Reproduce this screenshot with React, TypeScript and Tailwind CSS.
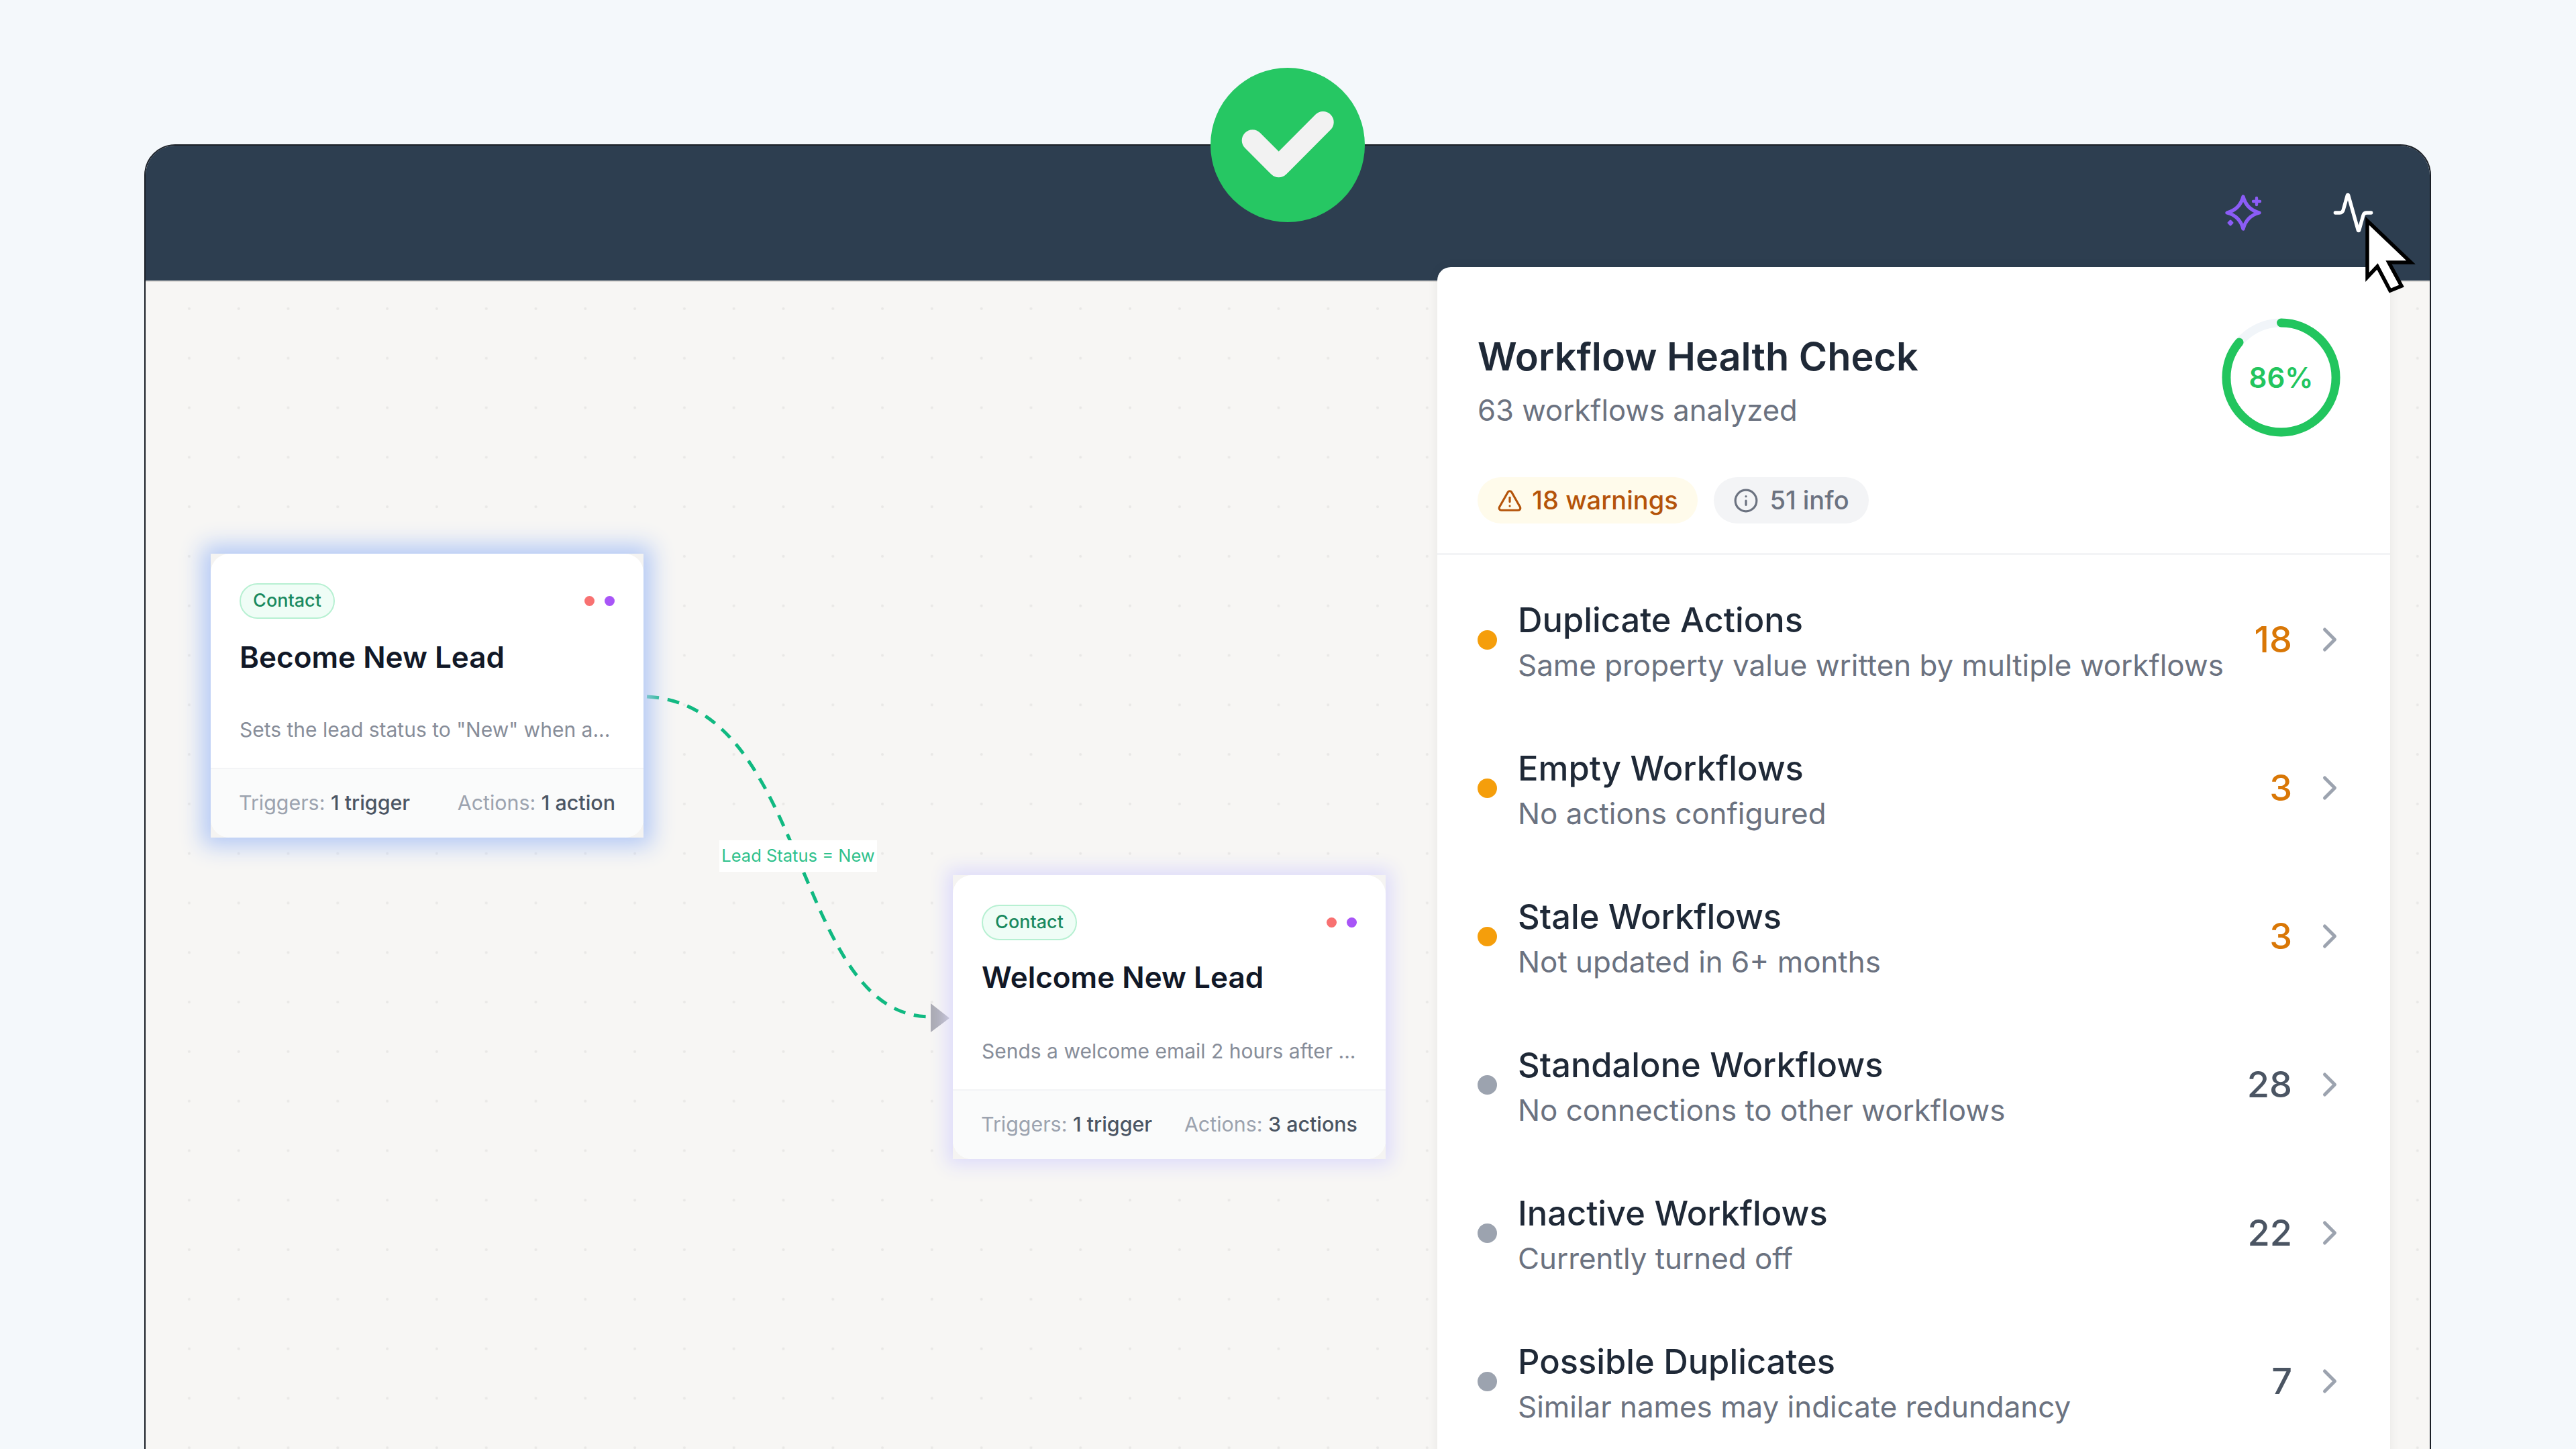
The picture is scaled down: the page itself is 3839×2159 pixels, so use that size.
import { Activity, ChevronRight, Info, TriangleAlert } from "lucide-react";

type Row = { title: string; sub: string; count: string; warn: boolean };
const rows: Row[] = [
  { title: "Duplicate Actions", sub: "Same property value written by multiple workflows", count: "18", warn: true },
  { title: "Empty Workflows", sub: "No actions configured", count: "3", warn: true },
  { title: "Stale Workflows", sub: "Not updated in 6+ months", count: "3", warn: true },
  { title: "Standalone Workflows", sub: "No connections to other workflows", count: "28", warn: false },
  { title: "Inactive Workflows", sub: "Currently turned off", count: "22", warn: false },
  { title: "Possible Duplicates", sub: "Similar names may indicate redundancy", count: "7", warn: false },
];

function HealthRow({ r }: { r: Row }) {
  return (
    <div className="flex h-[221px] shrink-0 items-center px-[60px]">
      <span className={`mt-[-5px] h-[29px] w-[29px] shrink-0 rounded-full ${r.warn ? "bg-[#f59e0b]" : "bg-[#9ca3af]"}`} />
      <div className="ml-[31px] flex min-w-0 flex-1 flex-col">
        <div className="text-[50.6px] leading-[60px] font-medium text-[#1f2937]">{r.title}</div>
        <div className="mt-[10px] text-[43.9px] leading-[54px] text-[#6b7280]">{r.sub}</div>
      </div>
      <div className={`mt-[-5px] text-[54px] leading-[60px] font-medium ${r.warn ? "text-[#d97706]" : "text-[#4b5563]"}`}>{r.count}</div>
      <ChevronRight className="mt-[-5px] ml-[26px] h-[60px] w-[60px] shrink-0 text-[#9ca3af]" strokeWidth={2} />
    </div>
  );
}

function NodeCard({ title, desc, actions, glow, className, titleClass }: { title: string; desc: string; actions: string; glow: string; className: string; titleClass: string }) {
  return (
    <div className={`absolute h-[423px] w-[645px] bg-[#f5f4f2] ${glow} ${className}`}>
      <div className="flex h-full flex-col overflow-hidden rounded-[28px] bg-white">
        <div className="flex h-[319px] flex-col px-[43px] pt-[44px]">
          <div className="flex items-center justify-between">
            <span className="flex h-[53px] w-[142px] items-center justify-center rounded-full border-2 border-[#b7f0d2] bg-[#effdf6] text-[27px] font-medium text-[#1a8a5f]">Contact</span>
            <span className="flex gap-[15px]">
              <span className="h-[15px] w-[15px] rounded-full bg-[#f87171]" />
              <span className="h-[15px] w-[15px] rounded-full bg-[#a855f7]" />
            </span>
          </div>
          <div className={`text-[44px] leading-[60px] font-semibold text-[#111827] ${titleClass}`}>{title}</div>
          <div className="text-[30px] leading-[40px] whitespace-nowrap text-[#878d99]">{desc}</div>
        </div>
        <div className="flex flex-1 items-center justify-between border-t-2 border-[#f3f4f6] bg-[#fafbfb] px-[42px] text-[30.4px] text-[#9ca3af]">
          <span>Triggers: <span className="font-medium text-[#4b5563]">1 trigger</span></span>
          <span>Actions: <span className="font-medium text-[#4b5563]">{actions}</span></span>
        </div>
      </div>
    </div>
  );
}

export default function App() {
  return (
    <div className="relative h-[2159px] w-[3839px] overflow-hidden bg-[#f4f8fb] pt-[215px] pl-[215px] font-['Inter',sans-serif]">
      <div className="relative h-[2100px] w-[3408px] overflow-hidden rounded-t-[46px] border-2 border-[#1a1f26]">
        <div className="flex h-[201px] w-full items-center justify-end bg-[#2d3e50]">
          <svg className="mr-[100px] mb-[2px] h-[64px] w-[64px] text-[#8b5cf6]" viewBox="0 0 64 64" fill="none" stroke="currentColor" strokeWidth="5.3" strokeLinecap="round" strokeLinejoin="round">
            <path d="M32 8 Q37 27 56 32 Q37 37 32 56 Q27 37 8 32 Q27 27 32 8 Z" />
            <path d="M52 10 V20 M47 15 H57" strokeWidth="4.4" />
            <path d="M13 44 L16 47 L13 50 L10 47 Z" strokeWidth="3" fill="currentColor" />
          </svg>
          <Activity className="mr-[82px] mb-[2px] h-[64px] w-[64px] text-white" strokeWidth={2} />
        </div>
        <div className="relative h-[1900px] w-full border-t-2 border-[#dedcd9] bg-[#f7f6f4] bg-[radial-gradient(circle,#e9e8e6_1.5px,transparent_2.5px)] bg-[length:73.8px_73.8px] bg-[position:28px_3px]">
          <svg className="absolute top-0 left-0" width="1400" height="1400" fill="none">
            <path d="M747 618 C 990 630, 965 1095, 1170 1095" stroke="#10b981" strokeWidth="5" strokeDasharray="18 13" />
            <path d="M1170 1075 L1198 1097 L1170 1118 Z" fill="#a9a9b2" />
          </svg>
          <div className="absolute top-[832px] left-[855px] flex h-[47px] w-[235px] items-center justify-center bg-white text-[25.5px] text-[#2fc18c]">Lead Status = New</div>
          <NodeCard
            className="top-[405px] left-[97px]"
            glow="shadow-[0_0_32px_12px_#b2c8f6]"
            title="Become New Lead"
            titleClass="mt-[27px] mb-[58px]"
            desc={'Sets the lead status to "New" when a...'}
            actions="1 action"
          />
          <NodeCard
            className="top-[884px] left-[1203px]"
            glow="shadow-[0_0_26px_8px_#dcdafb]"
            title="Welcome New Lead"
            titleClass="mt-[25px] mb-[60px]"
            desc="Sends a welcome email 2 hours after ..."
            actions="3 actions"
          />
        </div>
        <div className="absolute top-[181px] left-[1925px] flex h-[1900px] w-[1420px] flex-col rounded-t-[20px] bg-white shadow-[0_0_16px_rgba(0,0,0,0.07)]">
          <div className="border-b-[3px] border-[#f3f4f6] px-[60px] pt-[76px] pb-[44px]">
            <div className="flex items-start justify-between">
              <div className="pt-[24px]">
                <div className="text-[57.6px] leading-[66px] font-semibold text-[#1f2937]">Workflow Health Check</div>
                <div className="mt-[23px] text-[43.6px] leading-[50px] text-[#6b7280]">63 workflows analyzed</div>
              </div>
              <div className="relative mr-[14px] h-[177px] w-[177px]">
                <svg viewBox="0 0 178 178" className="h-full w-full -rotate-90" fill="none">
                  <circle cx="89" cy="89" r="82" stroke="#f1f5f9" strokeWidth="13" />
                  <circle cx="89" cy="89" r="82" stroke="#22c55e" strokeWidth="13" strokeLinecap="round" strokeDasharray="443 515.2" />
                </svg>
                <div className="absolute inset-0 flex items-center justify-center text-[42px] font-semibold text-[#22c55e]">86%</div>
              </div>
            </div>
            <div className="mt-[60px] flex gap-[24px]">
              <span className="flex h-[69px] w-[328px] items-center justify-center gap-[14px] rounded-full bg-[#fffbeb] text-[38px] font-medium text-[#b45309]">
                <TriangleAlert className="h-[38px] w-[38px]" strokeWidth={2} />
                18 warnings
              </span>
              <span className="flex h-[69px] w-[231px] items-center justify-center gap-[16px] rounded-full bg-[#f3f4f6] text-[38px] font-medium text-[#6b7280]">
                <Info className="h-[38px] w-[38px]" strokeWidth={2} />
                51 info
              </span>
            </div>
          </div>
          <div className="flex flex-col pt-[18px]">
            {rows.map((r) => (
              <HealthRow key={r.title} r={r} />
            ))}
          </div>
        </div>
      </div>
      <div className="absolute top-[101px] left-[1804px] h-[230px] w-[230px] rounded-full bg-[#26c763]">
        <svg viewBox="0 0 230 230" className="h-full w-full" fill="none">
          <path d="M62.7 108.3 L101.7 147.3 L167.7 81" stroke="#f2f2f2" strokeWidth="32" strokeLinecap="round" strokeLinejoin="round" />
        </svg>
      </div>
      <svg className="absolute top-[315px] left-[3515px]" width="90" height="125" viewBox="0 0 90 125" fill="white" stroke="black" strokeWidth="5.5">
        <path d="M13 14 L78 76 L45 76 L64 111 L47 118 L28 82 L13 98 Z" />
      </svg>
    </div>
  );
}
